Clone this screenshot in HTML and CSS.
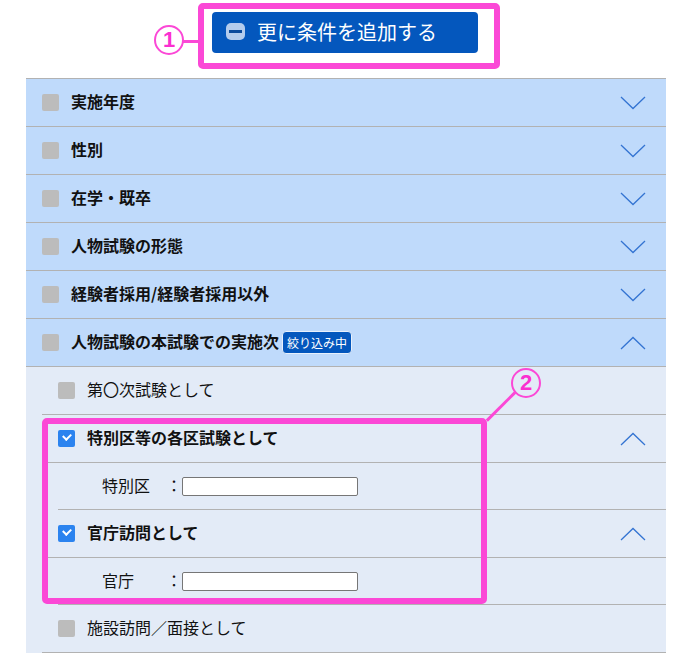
FILE: index.html
```html
<!DOCTYPE html>
<html lang="ja">
<head>
    <meta charset="UTF-8">
    <title>条件を追加</title>
    <link rel="stylesheet" href="styles.css">
</head>
<body>

<div class="page">
    <!-- 追加ボタン -->
    <div class="toolbar">
        <button class="add-button">
            <span class="minus-icon"></span>
            更に条件を追加する
        </button>
    </div>

    <!-- 条件リスト -->
    <ul class="filter-list">
        <li class="filter-row">
            <span class="box"></span><span class="label">実施年度</span>
            <svg class="chevron" viewBox="0 0 26 14"><polyline points="1,1 13,12.5 25,1"/></svg>
        </li>
        <li class="filter-row">
            <span class="box"></span><span class="label">性別</span>
            <svg class="chevron" viewBox="0 0 26 14"><polyline points="1,1 13,12.5 25,1"/></svg>
        </li>
        <li class="filter-row">
            <span class="box"></span><span class="label">在学・既卒</span>
            <svg class="chevron" viewBox="0 0 26 14"><polyline points="1,1 13,12.5 25,1"/></svg>
        </li>
        <li class="filter-row">
            <span class="box"></span><span class="label">人物試験の形態</span>
            <svg class="chevron" viewBox="0 0 26 14"><polyline points="1,1 13,12.5 25,1"/></svg>
        </li>
        <li class="filter-row">
            <span class="box"></span><span class="label">経験者採用/経験者採用以外</span>
            <svg class="chevron" viewBox="0 0 26 14"><polyline points="1,1 13,12.5 25,1"/></svg>
        </li>
        <li class="filter-row">
            <span class="box"></span><span class="label">人物試験の本試験での実施次</span>
            <span class="badge">絞り込み中</span>
            <svg class="chevron" viewBox="0 0 26 14"><polyline points="1,13 13,1.5 25,13"/></svg>
        </li>

        <!-- 展開中のサブ項目 -->
        <li class="sub-area">
            <ul class="sub-list">
                <li class="sub-row">
                    <span class="box"></span><span class="sub-label">第〇次試験として</span>
                </li>
                <li class="sub-row">
                    <span class="box checked"></span><span class="sub-label bold">特別区等の各区試験として</span>
                    <svg class="chevron" viewBox="0 0 26 14"><polyline points="1,13 13,1.5 25,13"/></svg>
                </li>
                <li class="input-row">
                    <span class="input-label">特別区</span><span class="colon">：</span><input type="text" class="text-input">
                </li>
                <li class="sub-row">
                    <span class="box checked"></span><span class="sub-label bold">官庁訪問として</span>
                    <svg class="chevron" viewBox="0 0 26 14"><polyline points="1,13 13,1.5 25,13"/></svg>
                </li>
                <li class="input-row">
                    <span class="input-label">官庁</span><span class="colon">：</span><input type="text" class="text-input">
                </li>
                <li class="sub-row">
                    <span class="box"></span><span class="sub-label">施設訪問／面接として</span>
                </li>
            </ul>
        </li>
    </ul>

    <!-- 注釈 -->
    <div class="note-box note-box-1"></div>
    <div class="note-line note-line-1"></div>
    <div class="note-num note-num-1">1</div>

    <div class="note-box note-box-2"></div>
    <div class="note-line note-line-2"></div>
    <div class="note-num note-num-2">2</div>
</div>

</body>
</html>
```

FILE: styles.css
```css
body {
    margin: 0;
    background-color: #fff;
    font-family: "Noto Sans CJK JP", "Noto Sans", sans-serif;
    color: #111;
}
.page {
    position: relative;
    width: 694px;
    height: 664px;
}
.toolbar {
    height: 78px;
    display: flex;
    justify-content: center;
    align-items: flex-start;
    padding-right: 4px;
    box-sizing: border-box;
}
.add-button {
    margin-top: 12px;
    width: 266px;
    height: 41px;
    display: flex;
    align-items: center;
    padding: 0 0 2px 14px;
    gap: 12px;
    background-color: #0457bd;
    color: #fff;
    border: none;
    border-radius: 4px;
    font-family: inherit;
    font-size: 20px;
    cursor: pointer;
}
.minus-icon {
    width: 19px;
    height: 17px;
    border-radius: 5px;
    background-color: #b4cced;
    display: flex;
    align-items: center;
    justify-content: center;
}
.minus-icon::before {
    content: "";
    width: 13px;
    height: 3px;
    background-color: #0b4a9c;
}
.filter-list {
    list-style: none;
    margin: 0 28px 0 26px;
    padding: 0;
    border-top: 1px solid #b2b2b2;
}
.filter-row {
    height: 47px;
    display: flex;
    align-items: center;
    padding: 0 20px 0 16px;
    background-color: #bfdafb;
    border-bottom: 1px solid #b2b2b2;
}
.box {
    width: 17px;
    height: 17px;
    border-radius: 2px;
    background-color: #bcbcbc;
    flex-shrink: 0;
    margin-right: 12px;
    position: relative;
}
.box.checked {
    background-color: #2b83ef;
}
.box.checked::after {
    content: "";
    position: absolute;
    left: 5px;
    top: 3px;
    width: 6px;
    height: 4px;
    border-left: 2px solid #fff;
    border-bottom: 2px solid #fff;
    transform: rotate(-45deg);
}
.label,
.sub-label,
.input-label,
.colon {
    margin-bottom: 3px;
}
.label {
    font-size: 16px;
    font-weight: bold;
}
.badge {
    margin-left: 3px;
    padding: 0 4px;
    height: 23px;
    line-height: 21px;
    box-sizing: border-box;
    font-size: 12px;
    color: #fff;
    background-color: #0457bd;
    border: 1px solid #e8f0fb;
    border-radius: 4px;
}
.chevron {
    margin-left: auto;
    width: 26px;
    height: 14px;
    fill: none;
    stroke: #3474d2;
    stroke-width: 1.3;
}
.sub-area {
    background-color: #e3ebf7;
    padding-left: 16px;
}
.sub-list {
    list-style: none;
    margin: 0;
    padding: 0;
}
.sub-row {
    height: 47px;
    display: flex;
    align-items: center;
    padding: 0 20px 0 16px;
    border-bottom: 1px solid #b2b2b2;
    font-size: 16px;
}
.sub-label.bold {
    font-weight: bold;
}
.input-row {
    height: 46px;
    display: flex;
    align-items: center;
    margin-left: 16px;
    padding-left: 44px;
    border-bottom: 1px solid #b2b2b2;
    font-size: 16px;
}
.input-label {
    width: 64px;
}
.colon {
    width: 16px;
}
.text-input {
    width: 176px;
    height: 19px;
    box-sizing: border-box;
    border: 1px solid #767676;
    border-radius: 2px;
    background-color: #fff;
    padding: 0 4px;
}

/* 注釈 */
.note-box {
    position: absolute;
    border: 6px solid #fb48d6;
    border-radius: 5px;
    box-sizing: border-box;
}
.note-box-1 {
    left: 198px;
    top: 3px;
    width: 302px;
    height: 66px;
}
.note-box-2 {
    left: 42px;
    top: 418px;
    width: 445px;
    height: 186px;
}
.note-num {
    position: absolute;
    width: 30px;
    height: 30px;
    border: 2px solid #fb48d6;
    border-radius: 50%;
    box-sizing: border-box;
    color: #fb2fd0;
    font-family: "Liberation Sans", sans-serif;
    font-weight: bold;
    font-size: 22px;
    line-height: 26px;
    text-align: center;
    background-color: #fff;
}
.note-num-1 {
    left: 154px;
    top: 25px;
}
.note-num-2 {
    left: 511px;
    top: 368px;
    background-color: #e3ebf7;
}
.note-line {
    position: absolute;
    background-color: #fb48d6;
}
.note-line-1 {
    left: 183px;
    top: 40px;
    width: 16px;
    height: 3px;
}
.note-line-2 {
    left: 481px;
    top: 405px;
    width: 40px;
    height: 3px;
    transform: rotate(-45deg);
}
```
